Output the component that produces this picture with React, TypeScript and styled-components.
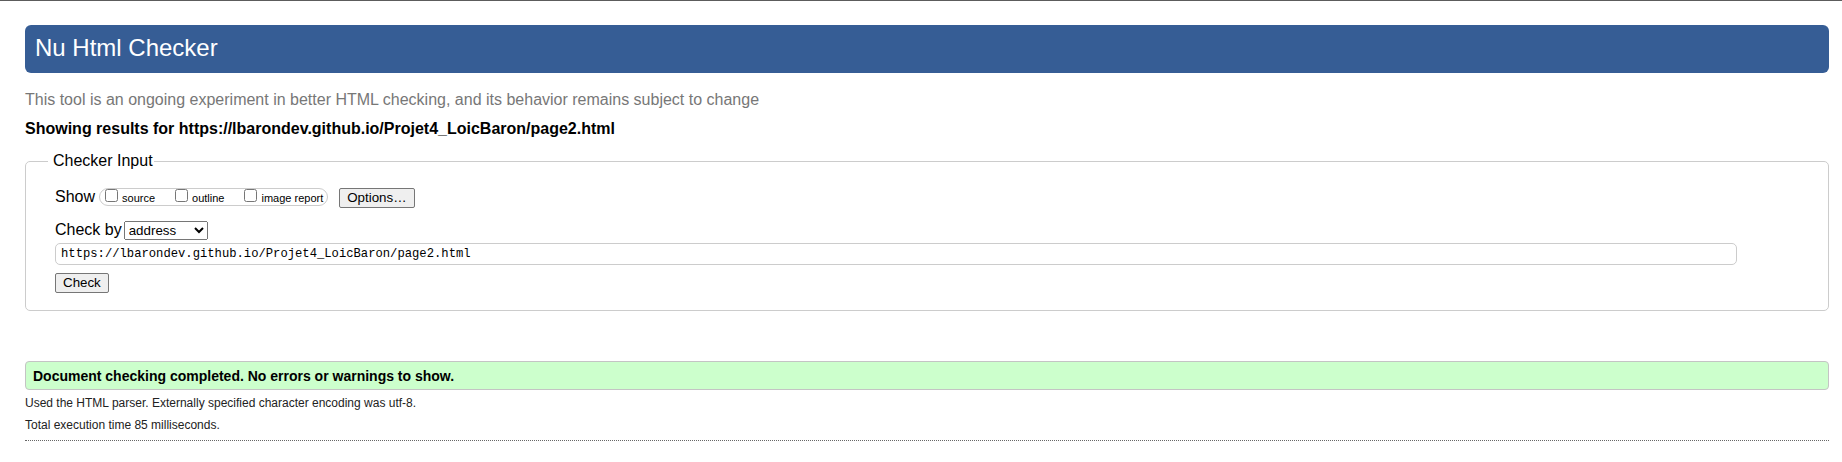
import React from "react";
import styled, { createGlobalStyle } from "styled-components";

const GlobalStyle = createGlobalStyle`
  html, body { margin: 0; padding: 0; background: #fff; }
  body { font-family: "Liberation Sans", Arial, sans-serif; color: #000; }
`;

const Page = styled.div`
  border-top: 1px solid #5c5c5c;
  padding: 24px 13px 0 25px;
  min-height: 437px;
`;

const Banner = styled.h1`
  margin: 0;
  height: 48px;
  box-sizing: border-box;
  padding: 9px 10px 12px;
  background: #365d95;
  border-radius: 6px;
  color: #fff;
  font-size: 24px;
  font-weight: normal;
  line-height: 27px;
`;

const Lead = styled.p`
  margin: 17.5px 0 0;
  color: #777;
  font-size: 16px;
  line-height: normal;
`;

const Results = styled.p`
  margin: 11px 0 0;
  font-size: 16px;
  font-weight: bold;
  line-height: normal;
`;

const Panel = styled.fieldset`
  margin: 14.5px 0 0;
  padding: 17.5px 29px 17px;
  border: 1px solid #cccccc;
  border-radius: 5px;
  min-inline-size: 0;
`;

const PanelLegend = styled.legend`
  margin-left: -7px;
  padding: 0 1px 0 5px;
  font-size: 16px;
  line-height: normal;
`;

const Row = styled.div<{ $top?: number }>`
  display: flex;
  align-items: baseline;
  margin-top: ${(p) => p.$top ?? 0}px;
`;

const RowLabel = styled.span`
  font-size: 16px;
  line-height: normal;
`;

const OptionGroup = styled.div`
  display: flex;
  align-items: flex-start;
  box-sizing: border-box;
  height: 18px;
  margin-left: 4px;
  padding: 0 4px 0 5px;
  border: 1px solid #cccccc;
  border-radius: 9px;
`;

const OptionLabel = styled.label`
  display: inline-flex;
  align-items: baseline;
  font-size: 11px;
  line-height: normal;
  margin-right: 20px;
  &:last-child {
    margin-right: 0;
  }
`;

const Box = styled.input.attrs({ type: "checkbox" })`
  width: 13px;
  height: 13px;
  margin: 0 4px 0 0;
`;

const Button = styled.button<{ $ml?: number }>`
  font: 13.333px "Liberation Sans", Arial, sans-serif;
  color: #000;
  background: #efefef;
  border: 1px solid #767676;
  border-radius: 2px;
  padding: 1px 7px;
  height: 20px;
  line-height: normal;
  margin-left: ${(p) => p.$ml ?? 0}px;
`;

const Select = styled.select`
  font: 13.333px "Liberation Sans", Arial, sans-serif;
  color: #000;
  width: 84px;
  margin-left: 2px;
`;

const UrlField = styled.input`
  display: block;
  box-sizing: border-box;
  width: calc(100% - 62px);
  height: 22px;
  margin: 3px 0 0;
  padding: 0 5px;
  border: 1px solid #cccccc;
  border-radius: 5px;
  font: 12.2px "Liberation Mono", "DejaVu Sans Mono", monospace;
  color: #000;
  outline: none;
`;

const Success = styled.p`
  margin: 50px 0 0;
  box-sizing: border-box;
  height: 29px;
  padding: 6px 7px 0;
  background: #ccffcc;
  border: 1px solid #c4c4c4;
  border-radius: 4px;
  font-size: 14px;
  font-weight: bold;
  line-height: 16px;
`;

const Note = styled.p<{ $top: number }>`
  margin: ${(p) => p.$top}px 0 0;
  font-size: 12px;
  line-height: normal;
  color: #222;
`;

const Rule = styled.div`
  margin-top: 8px;
  border-top: 1px dotted #666;
`;

export default function App() {
  return (
    <>
      <GlobalStyle />
      <Page>
        <Banner>Nu Html Checker</Banner>
        <Lead>
          This tool is an ongoing experiment in better HTML checking, and its
          behavior remains subject to change
        </Lead>
        <Results>
          Showing results for https://lbarondev.github.io/Projet4_LoicBaron/page2.html
        </Results>
        <Panel>
          <PanelLegend>Checker Input</PanelLegend>
          <Row>
            <RowLabel>Show</RowLabel>
            <OptionGroup>
              <OptionLabel>
                <Box />
                source
              </OptionLabel>
              <OptionLabel>
                <Box />
                outline
              </OptionLabel>
              <OptionLabel>
                <Box />
                image report
              </OptionLabel>
            </OptionGroup>
            <Button $ml={11}>Options…</Button>
          </Row>
          <Row $top={13}>
            <RowLabel>Check by</RowLabel>
            <Select defaultValue="address">
              <option value="address">address</option>
              <option value="file">file upload</option>
              <option value="text">text input</option>
            </Select>
          </Row>
          <UrlField
            type="url"
            defaultValue="https://lbarondev.github.io/Projet4_LoicBaron/page2.html"
          />
          <Row $top={8}>
            <Button>Check</Button>
          </Row>
        </Panel>
        <Success>
          Document checking completed. No errors or warnings to show.
        </Success>
        <Note $top={6}>
          Used the HTML parser. Externally specified character encoding was utf-8.
        </Note>
        <Note $top={8}>Total execution time 85 milliseconds.</Note>
        <Rule />
      </Page>
    </>
  );
}
